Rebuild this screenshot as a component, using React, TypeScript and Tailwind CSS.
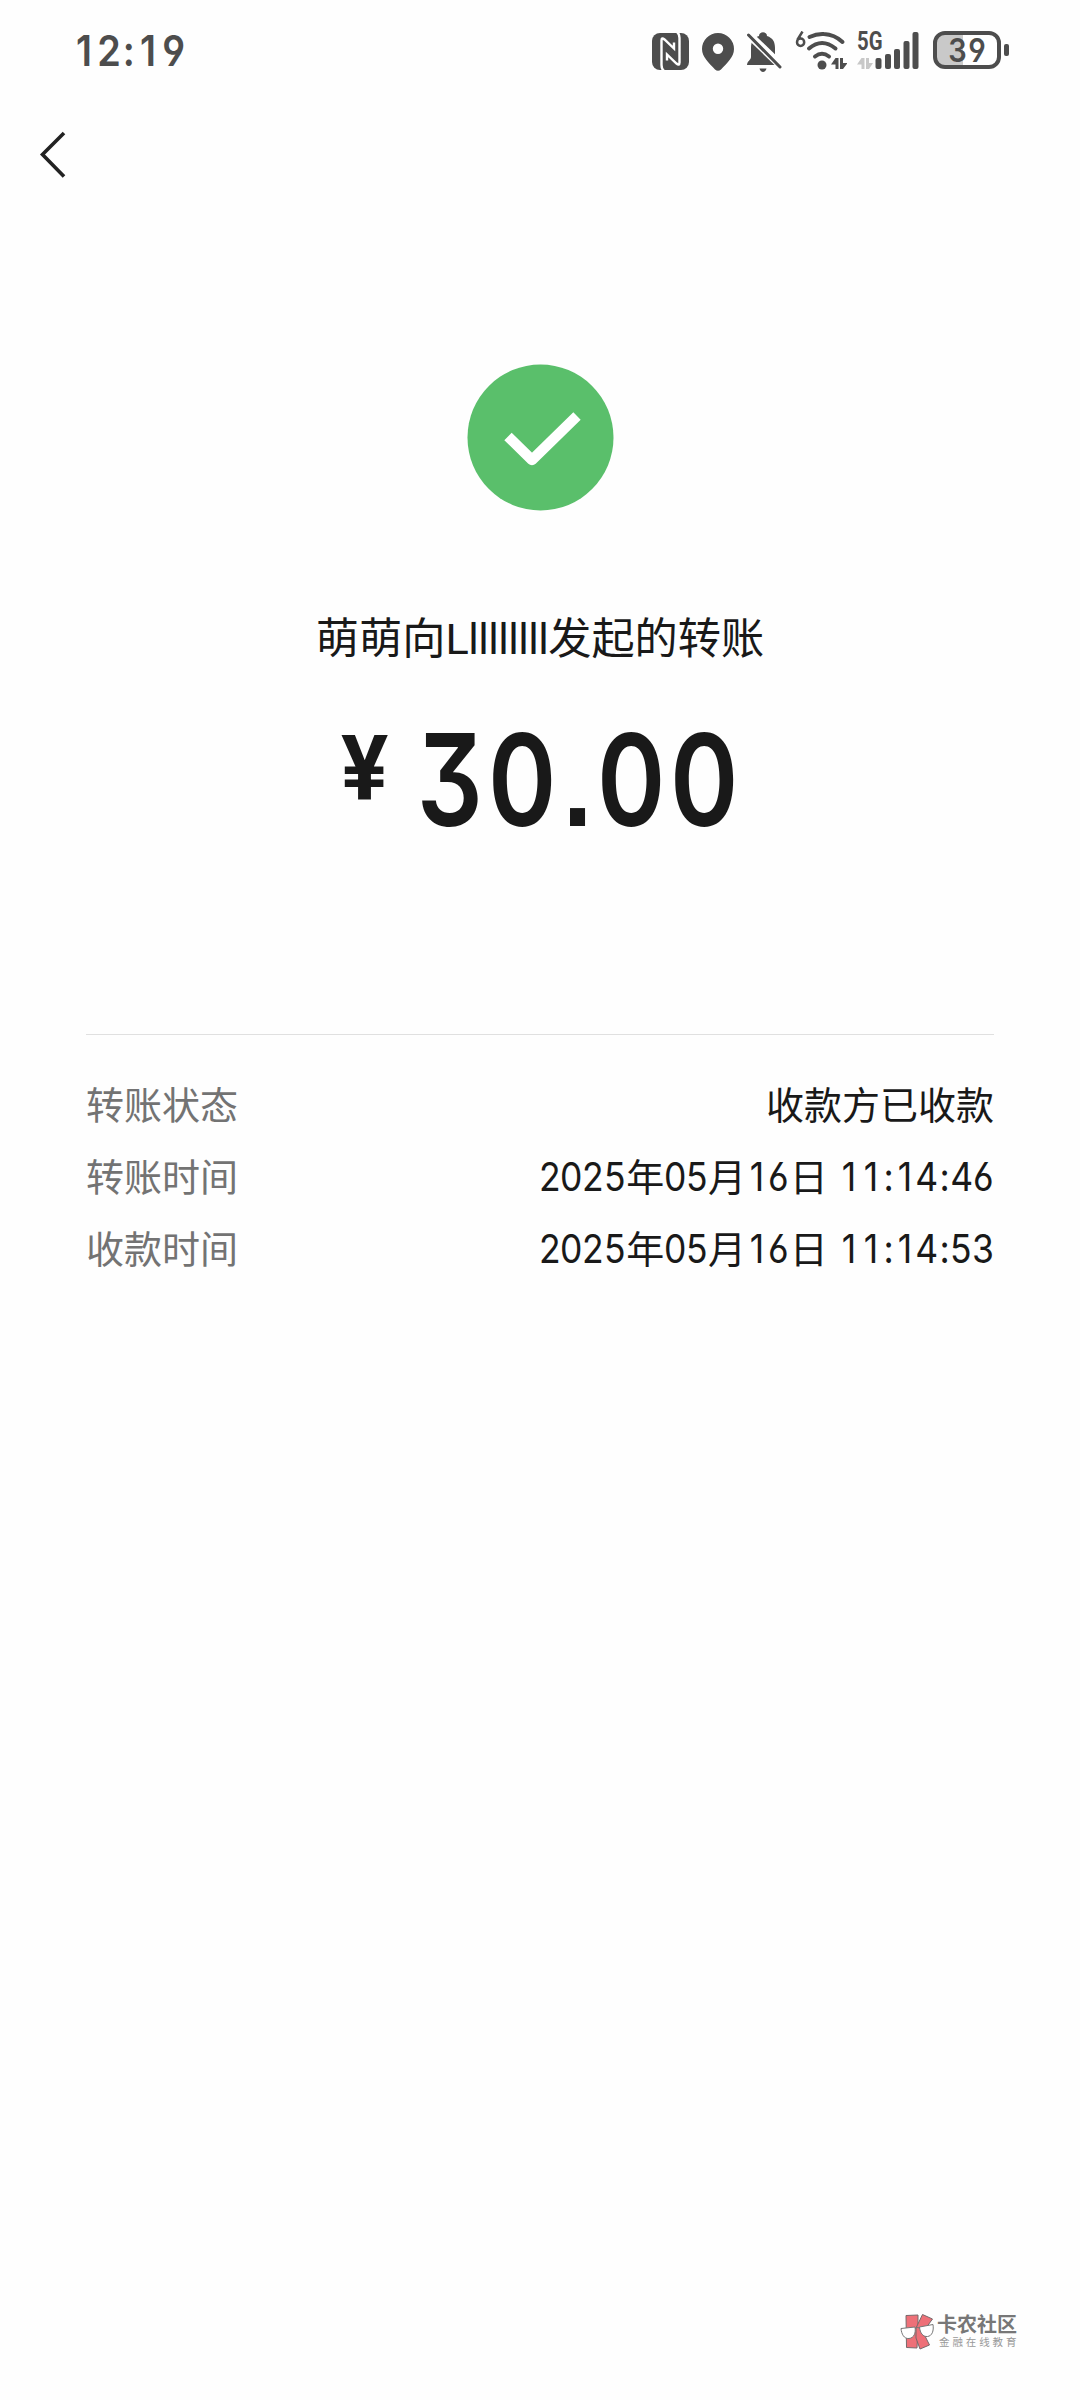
const details = [
  { label: "转账状态", value: "收款方已收款" },
  { label: "转账时间", value: "2025年05月16日 11:14:46" },
  { label: "收款时间", value: "2025年05月16日 11:14:53" },
];

interface DigitsProps {
  text: string;
  cell: string;
  mark: string;
  scale: string;
  className?: string;
}

// every digit sits in its own narrow cell, ":" and "." get a smaller one
function Digits({ text, cell, mark, scale, className = "" }: DigitsProps) {
  return (
    <span
      className={`inline-flex font-['Inter',sans-serif] [font-feature-settings:'cv03','cv04'] [font-optical-sizing:none] ${className}`}
    >
      {text.split("").map((char, i) => (
        <span key={i} className={`flex shrink-0 justify-center ${/\d/.test(char) ? cell : mark}`}>
          <span className={scale}>{char}</span>
        </span>
      ))}
    </span>
  );
}

function StatusBar() {
  return (
    <header className="flex h-[102px] items-start justify-between pl-[71px] pr-[71px] text-[#4d4d4d]">
      <Digits
        text="12:19"
        cell="w-[25.7px]"
        mark="w-[12.3px]"
        scale="scale-x-[0.9]"
        className="mt-[26px] text-[42px] leading-[50px] font-semibold"
      />
      <div className="mt-[31px] flex h-[42px] items-start">
        {/* nfc */}
        <svg className="mt-[2px] mr-[13px]" width="37" height="37" viewBox="0 0 37 37">
          <rect width="37" height="37" rx="8" fill="#4d4d4d" />
          <path d="M12 38Q9.500 36 9.500 32V7.500Q9.500 4 12.500 6.500L22 15.500V9.500M25 -1Q27.500 1 27.500 5V29.500Q27.500 33 24.500 30.500L15 21.500V27.500" fill="none" stroke="#fff" strokeWidth="2.400" />
        </svg>
        {/* location */}
        <svg className="mt-[2px] mr-[12px]" width="32" height="38" viewBox="0 0 32 38">
          <path fillRule="evenodd" d="M16 0a16 16 0 0 0-16 16c0 8 7 14 13 20.500q3 2.500 6 0C25 30 32 24 32 16A16 16 0 0 0 16 0zM16 10.500a5.200 5.200 0 1 1 0 10.400a5.200 5.200 0 0 1 0-10.400z" fill="#4d4d4d" />
        </svg>
        {/* muted bell */}
        <svg className="mt-[1px] mr-[12px]" width="37" height="41" viewBox="0 0 37 41">
          <path d="M13 4c0-5 8-5 8 0c6 2 8 6 8 12v9c0 3 4 4 4 8H1c0-4 4-5 4-8v-9C5 10 7 6 13 4z" fill="#4d4d4d" />
          <path d="M13.500 36.500h7c-1 4.500-6 4.500-7 0z" fill="#4d4d4d" />
          <path d="M0 0L37 35.500" stroke="#fff" strokeWidth="8" />
          <path d="M2.500 3L34 35" stroke="#4d4d4d" strokeWidth="3" strokeLinecap="round" />
        </svg>
        {/* wifi 6 */}
        <svg className="mr-[10px]" width="52" height="40" viewBox="0 0 52 40">
          <path d="M7.500 0.500L2.300 9M9.200 11.300a3.600 3.700 0 1 1-7.200 0a3.600 3.700 0 1 1 7.200 0" fill="none" stroke="#4d4d4d" strokeWidth="2.500" />
          <g fill="none" stroke="#4d4d4d" strokeWidth="4" strokeLinecap="round">
            <path d="M14.500 6Q22 2.500 29 3Q39.500 3.500 47.500 11" />
            <path d="M14 17.500Q27 6.500 40.500 17.500" />
            <path d="M20 25.500Q27 20 34 25.500" />
          </g>
          <circle cx="27" cy="34" r="4.500" fill="#4d4d4d" />
          <path d="M40.500 27v11h3V27zM40.500 27L36 33.500h5zM45 27v11h3V27zM48 38l4.500-6h-5z" fill="#4d4d4d" />
        </svg>
        {/* 5g signal */}
        <svg className="mr-[14px] overflow-visible" width="62" height="40" viewBox="0 0 62 40">
          <text x="0" y="19" textLength="25.500" lengthAdjust="spacingAndGlyphs" fill="#4d4d4d" fontFamily="Roboto, sans-serif" fontWeight="700" fontSize="25">5G</text>
          <path d="M4.500 27v11h3V27zM4.500 27L0 33.500h5zM9 27v11h3V27zM12 38l4-6h-4z" fill="#c8c8c8" />
          <g fill="#4d4d4d">
            <rect x="18.500" y="27" width="6" height="11" rx="2" />
            <rect x="28" y="23" width="6" height="15" rx="2" />
            <rect x="37" y="18" width="6" height="20" rx="2" />
            <rect x="46.500" y="10" width="6" height="28" rx="2" />
            <rect x="55.500" y="1" width="6" height="37" rx="2" />
          </g>
        </svg>
        {/* battery */}
        <div className="flex items-center gap-[3px]">
          <div className="flex h-[38px] w-[68px] items-center justify-center rounded-[12px] border-4 border-[#4d4d4d] bg-[linear-gradient(90deg,#c9c9c9_26px,#fff_26px)]">
            <Digits text="39" cell="w-[20px]" mark="w-2" scale="scale-x-[0.88]" className="text-[33px] leading-[30px] font-semibold" />
          </div>
          <div className="h-3 w-[5px] rounded-[2px] bg-[#4d4d4d]" />
        </div>
      </div>
    </header>
  );
}

function Value({ text }: { text: string }) {
  const parts = text.split(/([\d:]+|\s)/).filter(Boolean);
  return (
    <span className="flex items-center text-[#191919]">
      {parts.map((part, i) => {
        if (part === " ") return <span key={i} className="w-[10.5px] whitespace-pre"> </span>;
        if (/\d/.test(part))
          return <Digits key={i} text={part} cell="w-[21.9px]" mark="w-[12.2px]" scale="scale-x-[0.91]" className="pt-[3px] text-[39px] font-[380]" />;
        return <span key={i}>{part}</span>;
      })}
    </span>
  );
}

function Watermark() {
  return (
    <footer className="mt-auto mb-[50px] flex items-start gap-[3px] pl-[900px]">
      <svg width="34" height="36" viewBox="0 0 34 36">
        <g fill="#ee7078" stroke="#77696b" strokeWidth="1">
          <path d="M6 1.500L18 1L18 13L17 34L6.500 33.500z" />
          <path d="M22.500 0.500L32.500 5L23 18L29.500 31L20 35L16 24V14z" />
        </g>
        <g fill="#fff" stroke="#777" strokeWidth="1">
          <path d="M1 14.500L15 13C16 19 14 24 9 24.500C4 25 1.500 20 1 14.500z" />
          <path d="M19.500 13L33 10.500C34 17 32 22 27.500 22.500C23 23 20 19 19.500 13z" />
          <path d="M15 14.500Q17 12.500 19.500 14" fill="none" />
        </g>
      </svg>
      <div className="flex flex-col whitespace-nowrap">
        <span className="text-[20px] leading-[20px] font-bold text-[#777]">卡农社区</span>
        <span className="mt-[2px] pl-[2px] text-[10.500px] leading-[12px] tracking-[2.900px] text-[#999]">金融在线教育</span>
      </div>
    </footer>
  );
}

export default function App() {
  return (
    <div className="flex h-[2400px] w-[1080px] flex-col overflow-hidden bg-[#fefefe] font-['Noto_Sans_CJK_SC',sans-serif]">
      <StatusBar />
      <nav className="h-[262px] pt-[28px] pl-[38px]">
        <svg width="30" height="48" viewBox="0 0 30 48" fill="none" stroke="#222" strokeWidth="3.600">
          <path d="M26 3L4.500 24.500L26 46.500" />
        </svg>
      </nav>

      <main className="flex flex-col">
        <svg className="ml-[467px] shrink-0" width="147" height="147" viewBox="0 0 147 147">
          <circle cx="73.500" cy="73.500" r="73" fill="#5abf6b" />
          <path d="M41 72.500L65 96L110 52" fill="none" stroke="#fff" strokeWidth="10.500" strokeLinejoin="round" />
        </svg>

        <h1 className="mt-[94px] h-[60px] text-center text-[43.200px] leading-[60px] text-[#191919]">
          萌萌向<span className="font-['Roboto',sans-serif] tracking-[-0.500px]">Lllllllll</span>发起的转账
        </h1>

        <div className="mt-[45px] flex h-[140px] items-start pl-[341px] text-[#191919]">
          <span className="mt-[9px] w-[72px] origin-left scale-x-[0.97] font-['Roboto',sans-serif] text-[91px] leading-[100px] font-bold">¥</span>
          <Digits
            text="30.00"
            cell="w-[73px]"
            mark="w-[36px]"
            scale="scale-x-[0.81] [font-feature-settings:'cv09','ss07']"
            className="text-[128px] leading-[140px] font-semibold"
          />
        </div>

        <section className="mx-[86px] mt-[184px] border-t border-[#e0e0e0] pt-[32px] text-[38px] leading-[72px]">
          {details.map((row) => (
            <div key={row.label} className="flex h-[72px] items-center justify-between">
              <span className="text-[#737373]">{row.label}</span>
              <Value text={row.value} />
            </div>
          ))}
        </section>
      </main>

      <Watermark />
    </div>
  );
}
